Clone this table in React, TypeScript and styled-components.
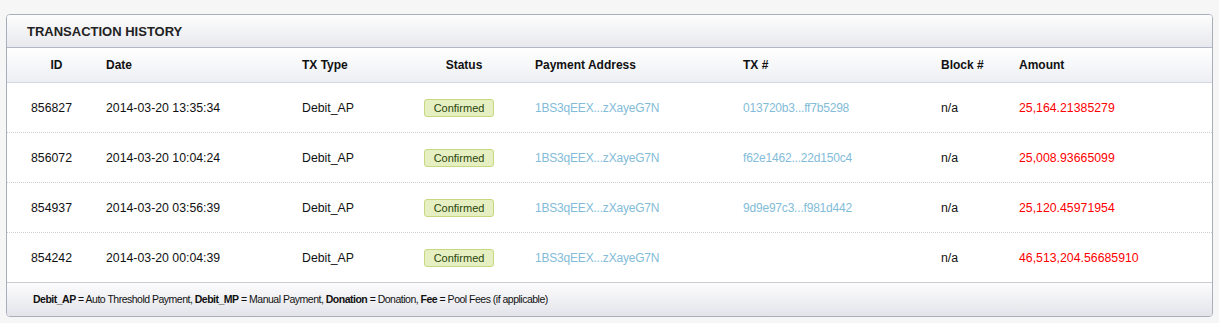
import styled, { createGlobalStyle } from "styled-components";
import { FC } from "react";

const GlobalStyle = createGlobalStyle`
  html, body {
    margin: 0;
    padding: 0;
    background: #f6f6f6;
  }
  body {
    font-family: "Liberation Sans", Arial, sans-serif;
    color: #111;
  }
`;

type Tx = {
  id: string;
  date: string;
  type: string;
  address: string;
  tx: string;
  block: string;
  amount: string;
};

const rows: Tx[] = [
  {
    id: "856827",
    date: "2014-03-20 13:35:34",
    type: "Debit_AP",
    address: "1BS3qEEX...zXayeG7N",
    tx: "013720b3...ff7b5298",
    block: "n/a",
    amount: "25,164.21385279",
  },
  {
    id: "856072",
    date: "2014-03-20 10:04:24",
    type: "Debit_AP",
    address: "1BS3qEEX...zXayeG7N",
    tx: "f62e1462...22d150c4",
    block: "n/a",
    amount: "25,008.93665099",
  },
  {
    id: "854937",
    date: "2014-03-20 03:56:39",
    type: "Debit_AP",
    address: "1BS3qEEX...zXayeG7N",
    tx: "9d9e97c3...f981d442",
    block: "n/a",
    amount: "25,120.45971954",
  },
  {
    id: "854242",
    date: "2014-03-20 00:04:39",
    type: "Debit_AP",
    address: "1BS3qEEX...zXayeG7N",
    tx: "",
    block: "n/a",
    amount: "46,513,204.56685910",
  },
];

const App: FC = () => {
  return (
    <>
      <GlobalStyle />
      <Page>
        <Panel>
          <PanelTitle>TRANSACTION HISTORY</PanelTitle>
          <HeadRow>
            <HeadCell $center>ID</HeadCell>
            <HeadCell>Date</HeadCell>
            <HeadCell>TX Type</HeadCell>
            <HeadCell $center>Status</HeadCell>
            <HeadCell>Payment Address</HeadCell>
            <HeadCell>TX #</HeadCell>
            <HeadCell>Block #</HeadCell>
            <HeadCell>Amount</HeadCell>
          </HeadRow>
          {rows.map((r, i) => (
            <Row key={r.id} $last={i === rows.length - 1}>
              <Cell $center>{r.id}</Cell>
              <Cell>{r.date}</Cell>
              <Cell>{r.type}</Cell>
              <Cell $center>
                <Badge>Confirmed</Badge>
              </Cell>
              <Cell>
                <Link href="#">{r.address}</Link>
              </Cell>
              <Cell>
                <Link href="#">{r.tx}</Link>
              </Cell>
              <Cell>{r.block}</Cell>
              <Cell>
                <Amount>{r.amount}</Amount>
              </Cell>
            </Row>
          ))}
          <PanelFooter>
            <b>Debit_AP</b> = Auto Threshold Payment, <b>Debit_MP</b> = Manual
            Payment, <b>Donation</b> = Donation, <b>Fee</b> = Pool Fees (if
            applicable)
          </PanelFooter>
        </Panel>
      </Page>
    </>
  );
};

const Page = styled.div`
  padding: 14px 6px 6px 6px;
`;

const Panel = styled.div`
  background: #fff;
  border: 1px solid #a9adbc;
  border-radius: 4px;
  overflow: hidden;
`;

const PanelTitle = styled.div`
  height: 32px;
  line-height: 33px;
  padding-left: 20px;
  font-size: 13px;
  font-weight: 700;
  color: #222;
  background: linear-gradient(to bottom, #fdfdfd, #e8e9ee);
  border-bottom: 1px solid #b3b7c5;
`;

const columns = "89px 196px 101px 132px 208px 198px 78px 1fr";

const HeadRow = styled.div`
  display: grid;
  grid-template-columns: ${columns};
  height: 34px;
  align-items: center;
  background: linear-gradient(to bottom, #ffffff, #eeeff3);
  border-bottom: 1px solid #d3d8e2;
`;

const HeadCell = styled.div<{ $center?: boolean }>`
  padding-left: 10px;
  font-size: 12px;
  font-weight: 700;
  color: #111;
  text-align: ${(p) => (p.$center ? "center" : "left")};
`;

const Row = styled.div<{ $last?: boolean }>`
  display: grid;
  grid-template-columns: ${columns};
  height: 49px;
  align-items: center;
  border-bottom: ${(p) => (p.$last ? "none" : "1px dotted #cfcfcf")};
`;

const Cell = styled.div<{ $center?: boolean }>`
  padding-left: ${(p) => (p.$center ? "0" : "10px")};
  font-size: 12.3px;
  color: #111;
  text-align: ${(p) => (p.$center ? "center" : "left")};
  white-space: nowrap;
`;

const Badge = styled.span`
  display: inline-block;
  box-sizing: border-box;
  width: 70px;
  height: 18px;
  line-height: 16px;
  font-size: 11px;
  color: #264409;
  background: #e6efc2;
  border: 1px solid #c6d880;
  border-radius: 3px;
  text-align: center;
`;

const Link = styled.a`
  color: #83bcd8;
  font-size: 12px;
  letter-spacing: -0.2px;
  text-decoration: none;
`;

const Amount = styled.span`
  color: #ff0000;
`;

const PanelFooter = styled.div`
  height: 33px;
  line-height: 33px;
  padding-left: 26px;
  font-size: 10.5px;
  letter-spacing: -0.5px;
  color: #111;
  background: linear-gradient(to bottom, #fcfcfd, #e3e4ea);
  border-top: 1px solid #c9ccd4;

  b {
    font-weight: 700;
  }
`;

export default App;
